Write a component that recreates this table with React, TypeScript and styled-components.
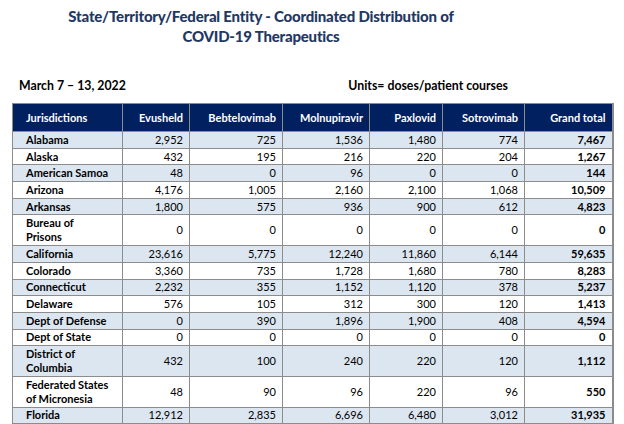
import React from 'react';
import styled, {createGlobalStyle} from 'styled-components';

const GlobalStyle = createGlobalStyle`
  html, body {
    margin: 0;
    padding: 0;
    background: #fff;
  }
  body {
    font-family: Lato, "Open Sans", "Liberation Sans", sans-serif;
  }
`;

const Page = styled.div`
  width: 624px;
  height: 424px;
  overflow: hidden;
  background: #fff;
`;

const Title = styled.h1`
  margin: 0;
  padding: 6px 102px 0 0;
  text-align: center;
  font-size: 15px;
  line-height: 20px;
  font-weight: 900;
  letter-spacing: -0.2px;
  color: #1f3864;
`;

const MetaRow = styled.div`
  display: flex;
  justify-content: space-between;
  align-items: baseline;
  margin-top: 32px;
  padding: 0 116px 0 19px;
  font-size: 12.3px;
  line-height: 16px;
  font-weight: 700;
  color: #000;
`;

const Table = styled.table`
  margin: 9px 0 0 12px;
  width: 600px;
  border-collapse: collapse;
  table-layout: fixed;
  font-size: 11px;
  color: #000;
  border-right: 2px solid #8c8c8c;
`;

const HeadCell = styled.th<{ $left?: boolean }>`
  background: #002060;
  color: #fff;
  font-weight: 700;
  line-height: 14px;
  padding: ${p => (p.$left ? '6.5px 0 6.5px 13px' : '6.5px 6px 6.5px 0')};
  text-align: ${p => (p.$left ? 'left' : 'right')};
  border: 1px solid #8c8c8c;
  white-space: nowrap;
`;

const Row = styled.tr<{ $shade: boolean }>`
  background: ${p => (p.$shade ? '#dce6f1' : '#fff')};
`;

const NameCell = styled.td`
  font-weight: 700;
  padding: 0.85px 4px 0.85px 13px;
  line-height: 14px;
  white-space: pre-line;
  border: 1px solid #8c8c8c;
`;

const NumCell = styled.td<{ $bold?: boolean }>`
  text-align: right;
  padding: 0.85px 6px 0.85px 0;
  line-height: 14px;
  font-weight: ${p => (p.$bold ? 700 : 400)};
  border: 1px solid #8c8c8c;
`;

const columns = ['Evusheld', 'Bebtelovimab', 'Molnupiravir', 'Paxlovid', 'Sotrovimab', 'Grand total'];
const widths = [110, 67, 93, 87, 73, 82, 88];

type Entry = { name: string, values: string[] };

const data: Entry[] = [
  {name: 'Alabama', values: ['2,952', '725', '1,536', '1,480', '774', '7,467']},
  {name: 'Alaska', values: ['432', '195', '216', '220', '204', '1,267']},
  {name: 'American Samoa', values: ['48', '0', '96', '0', '0', '144']},
  {name: 'Arizona', values: ['4,176', '1,005', '2,160', '2,100', '1,068', '10,509']},
  {name: 'Arkansas', values: ['1,800', '575', '936', '900', '612', '4,823']},
  {name: 'Bureau of\nPrisons', values: ['0', '0', '0', '0', '0', '0']},
  {name: 'California', values: ['23,616', '5,775', '12,240', '11,860', '6,144', '59,635']},
  {name: 'Colorado', values: ['3,360', '735', '1,728', '1,680', '780', '8,283']},
  {name: 'Connecticut', values: ['2,232', '355', '1,152', '1,120', '378', '5,237']},
  {name: 'Delaware', values: ['576', '105', '312', '300', '120', '1,413']},
  {name: 'Dept of Defense', values: ['0', '390', '1,896', '1,900', '408', '4,594']},
  {name: 'Dept of State', values: ['0', '0', '0', '0', '0', '0']},
  {name: 'District of\nColumbia', values: ['432', '100', '240', '220', '120', '1,112']},
  {name: 'Federated States\nof Micronesia', values: ['48', '90', '96', '220', '96', '550']},
  {name: 'Florida', values: ['12,912', '2,835', '6,696', '6,480', '3,012', '31,935']},
];

const App: React.FC = () => {
  return (
    <Page>
      <GlobalStyle/>
      <Title>
        State/Territory/Federal Entity - Coordinated Distribution of<br/>
        COVID-19 Therapeutics
      </Title>
      <MetaRow>
        <span>March 7 – 13, 2022</span>
        <span>Units= doses/patient courses</span>
      </MetaRow>
      <Table>
        <colgroup>
          {widths.map((w, i) => <col key={i} style={{width: w}}/>)}
        </colgroup>
        <thead>
          <tr>
            <HeadCell $left>Jurisdictions</HeadCell>
            {columns.map(c => <HeadCell key={c}>{c}</HeadCell>)}
          </tr>
        </thead>
        <tbody>
          {data.map((row, i) => (
            <Row key={row.name} $shade={i % 2 === 0}>
              <NameCell>{row.name}</NameCell>
              {row.values.map((v, j) => (
                <NumCell key={j} $bold={j === row.values.length - 1}>{v}</NumCell>
              ))}
            </Row>
          ))}
        </tbody>
      </Table>
    </Page>
  );
};

export default App;
